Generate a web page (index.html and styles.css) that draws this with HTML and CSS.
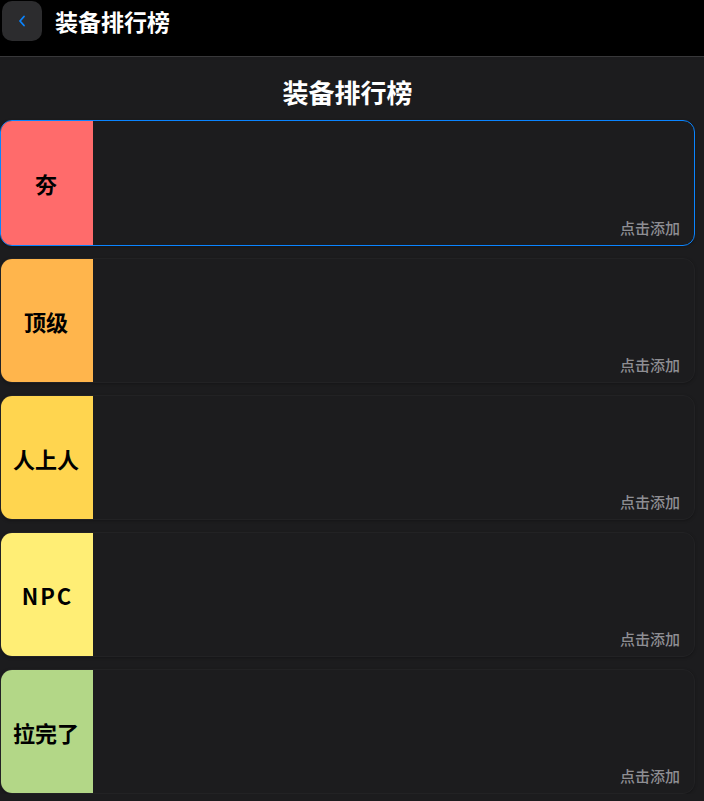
FILE: index.html
```html
<!DOCTYPE html>
<html lang="zh">
<head>
<meta charset="utf-8">
<title>装备排行榜</title>
<link rel="stylesheet" href="styles.css">
</head>
<body>
<header class="topbar">
  <button class="back" aria-label="返回">
    <svg width="10" height="14" viewBox="0 0 10 14"><path d="M7 2.5 L3 7 L7 11.5" fill="none" stroke="#0a84ff" stroke-width="1.8" stroke-linecap="round" stroke-linejoin="round"/></svg>
  </button>
  <h1 class="topbar-title">装备排行榜</h1>
</header>
<main class="page">
  <h2 class="page-title">装备排行榜</h2>
  <div class="tiers">
    <div class="tier selected">
      <div class="tier-label t-red">夯</div>
      <div class="tier-body"><span class="add">点击添加</span></div>
    </div>
    <div class="tier">
      <div class="tier-label t-orange">顶级</div>
      <div class="tier-body"><span class="add">点击添加</span></div>
    </div>
    <div class="tier">
      <div class="tier-label t-yellow">人上人</div>
      <div class="tier-body"><span class="add">点击添加</span></div>
    </div>
    <div class="tier">
      <div class="tier-label t-lemon latin">NPC</div>
      <div class="tier-body"><span class="add">点击添加</span></div>
    </div>
    <div class="tier">
      <div class="tier-label t-green">拉完了</div>
      <div class="tier-body"><span class="add">点击添加</span></div>
    </div>
  </div>
</main>
</body>
</html>
```
FILE: styles.css
```css
* { box-sizing: border-box; }
html, body {
  margin: 0;
  padding: 0;
  background: #1c1c1e;
  font-family: "Noto Sans CJK SC", "Noto Sans", sans-serif;
  color: #fff;
}
.topbar {
  height: 57px;
  background: #000;
  border-bottom: 1px solid #38383a;
  display: flex;
  align-items: flex-start;
  padding: 1px 0 0 2px;
}
.back {
  width: 40px;
  height: 40px;
  border: none;
  border-radius: 10px;
  background: #2c2c2e;
  display: flex;
  align-items: center;
  justify-content: center;
  padding: 0;
}
.topbar-title {
  margin: 0 0 0 13px;
  font-size: 23px;
  line-height: 40px;
  font-weight: 700;
  color: #fff;
}
.page {
  padding: 0 9px 0 0;
}
.page-title {
  margin: 0;
  height: 63px;
  padding-top: 6px;
  font-size: 26px;
  line-height: 1;
  font-weight: 700;
  display: flex;
  align-items: center;
  justify-content: center;
}
.tiers {
  display: flex;
  flex-direction: column;
  gap: 12px;
}
.tier {
  display: flex;
  height: 125px;
  border: 1px solid #222224;
  border-radius: 12px;
  overflow: hidden;
  background: #1c1c1e;
  box-shadow: 0 1px 3px rgba(0,0,0,0.25);
}
.tier.selected {
  border-color: #0a84ff;
  height: 126px;
}
.tier-label {
  width: 92px;
  flex: none;
  display: flex;
  align-items: center;
  justify-content: center;
  font-size: 22px;
  font-weight: 700;
  color: #000;
  padding-right: 2px;
}
.tier-label.latin {
  letter-spacing: 2px;
  padding-left: 1px;
  padding-right: 0;
}
.t-red { background: #ff6b6b; }
.t-orange { background: #ffb54c; }
.t-yellow { background: #ffd54f; }
.t-lemon { background: #ffee75; }
.t-green { background: #b3d787; }
.tier-body {
  flex: 1;
  display: flex;
  align-items: flex-end;
  justify-content: flex-end;
  padding: 0 14px 7px 0;
}
.add {
  font-size: 15px;
  font-weight: 500;
  color: #8e8e93;
}
```
